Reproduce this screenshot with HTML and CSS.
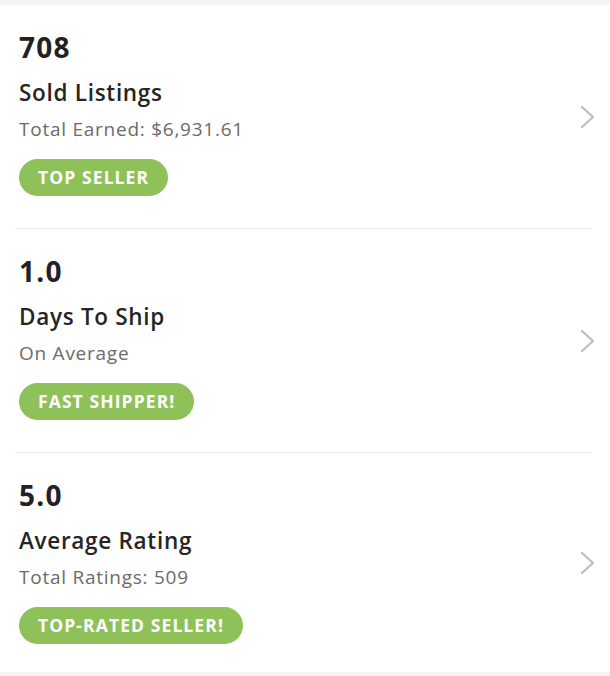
FILE: index.html
```html
<!DOCTYPE html>
<html>
<head>
<meta charset="utf-8">
<link rel="stylesheet" href="styles.css">
</head>
<body>
<div class="strip"></div>
<div class="list">
  <div class="row">
    <div class="info">
      <div class="num">708</div>
      <div class="title">Sold Listings</div>
      <div class="sub">Total Earned: $6,931.61</div>
      <span class="badge">TOP SELLER</span>
    </div>
    <svg class="chev" width="16" height="24" viewBox="0 0 16 24"><path d="M2 2 L13 12 L2 22" fill="none" stroke="#bdbdbd" stroke-width="2.2" stroke-linecap="round" stroke-linejoin="round"/></svg>
  </div>
  <div class="row">
    <div class="info">
      <div class="num">1.0</div>
      <div class="title">Days To Ship</div>
      <div class="sub">On Average</div>
      <span class="badge">FAST SHIPPER!</span>
    </div>
    <svg class="chev" width="16" height="24" viewBox="0 0 16 24"><path d="M2 2 L13 12 L2 22" fill="none" stroke="#bdbdbd" stroke-width="2.2" stroke-linecap="round" stroke-linejoin="round"/></svg>
  </div>
  <div class="row last">
    <div class="info">
      <div class="num">5.0</div>
      <div class="title">Average Rating</div>
      <div class="sub">Total Ratings: 509</div>
      <span class="badge">TOP-RATED SELLER!</span>
    </div>
    <svg class="chev" width="16" height="24" viewBox="0 0 16 24"><path d="M2 2 L13 12 L2 22" fill="none" stroke="#bdbdbd" stroke-width="2.2" stroke-linecap="round" stroke-linejoin="round"/></svg>
  </div>
</div>
<div class="strip bottom"></div>
</body>
</html>
```
FILE: styles.css
```css
html, body {
  margin: 0;
  padding: 0;
  background: #ffffff;
  font-family: "Open Sans", Lato, sans-serif;
  color: #222222;
}
.strip {
  height: 5px;
  background: #f5f5f6;
}
.strip.bottom {
  height: 4px;
}
.row {
  display: flex;
  align-items: center;
  justify-content: space-between;
  height: 223px;
  margin: 0 18px 0 15px;
  padding-left: 4px;
  border-bottom: 1px solid #ececec;
  box-sizing: content-box;
}
.row.last {
  border-bottom: none;
  height: 219px;
}
.info {
  display: flex;
  flex-direction: column;
  align-items: flex-start;
  align-self: flex-start;
  padding-top: 25px;
}
.num {
  font-size: 28px;
  font-weight: 700;
  line-height: 34px;
  letter-spacing: 1.3px;
  color: #222;
}
.title {
  font-size: 22.5px;
  font-weight: 600;
  line-height: 28px;
  letter-spacing: 0.7px;
  margin-top: 15px;
  color: #252525;
}
.sub {
  font-size: 19px;
  line-height: 24px;
  letter-spacing: 0.75px;
  margin-top: 10px;
  color: #6b6b6b;
}
.badge {
  margin-top: 18px;
  height: 37px;
  line-height: 37px;
  padding: 0 19px;
  border-radius: 19px;
  background: #8fc159;
  color: #ffffff;
  font-size: 17.5px;
  font-weight: 700;
  letter-spacing: 1.1px;
}
.chev {
  margin-right: -4px;
}
```
